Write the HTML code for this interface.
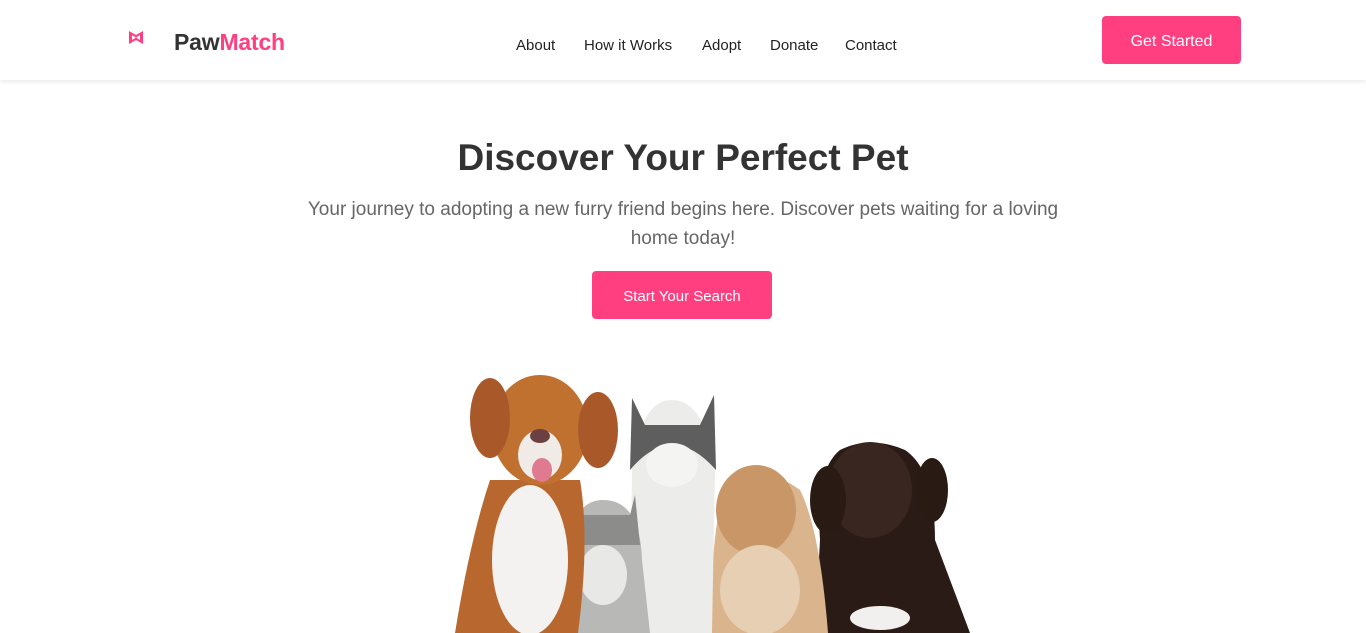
<!DOCTYPE html>
<html><head><meta charset="utf-8"><style>
*{margin:0;padding:0;box-sizing:border-box}
body{width:1366px;height:633px;overflow:hidden;background:#fff;font-family:"Liberation Sans",sans-serif;color:#333;position:relative}
header{position:absolute;left:0;top:0;width:1366px;height:80px;background:#fff;box-shadow:0 2px 4px rgba(0,0,0,.08)}
.logo{position:absolute;left:174px;top:29px;font-size:23px;font-weight:700;color:#333;letter-spacing:-0.2px}
.logo span{color:#ff3f7f}
nav a{position:absolute;top:37px;font-size:15px;color:#222;text-decoration:none;white-space:nowrap}
.btn{position:absolute;background:#ff3f7f;color:#fff;border-radius:4px;text-align:center}
h1{position:absolute;top:137px;width:100%;text-align:center;font-size:37px;font-weight:600;color:#333}
p.sub{position:absolute;top:195px;left:233px;width:900px;text-align:center;font-size:19px;line-height:29px;color:#666}
</style></head><body>
<header>
<svg style="position:absolute;left:128px;top:30px" width="16" height="15" viewBox="0 0 16 15"><path d="M1 1 L8 5 L15 1 L15 14 L8 10 L1 14 Z M4 5 L4 10 L8 7.5 Z M12 5 L12 10 L8 7.5Z" fill="#ff3f7f" fill-rule="evenodd"/></svg>
<div class="logo">Paw<span>Match</span></div>
<nav><a style="left:516px">About</a><a style="left:584px">How it Works</a><a style="left:702px">Adopt</a><a style="left:770px">Donate</a><a style="left:845px">Contact</a></nav>
<div class="btn" style="left:1102px;top:16px;width:139px;height:48px;line-height:51px;font-size:16px">Get Started</div>
</header>
<h1>Discover Your Perfect Pet</h1>
<p class="sub">Your journey to adopting a new furry friend begins here. Discover pets waiting for a loving<br>home today!</p>
<div class="btn" style="left:592px;top:271px;width:180px;height:48px;line-height:51px;font-size:15px">Start Your Search</div>
<svg style="position:absolute;left:0;top:0" width="1366" height="633">
<path d="M815 633 L820 540 Q815 470 840 450 Q870 435 905 450 Q935 470 935 540 L970 633Z" fill="#2b1b16"/>
<ellipse cx="870" cy="490" rx="42" ry="48" fill="#3a2620"/>
<ellipse cx="828" cy="500" rx="18" ry="34" fill="#2a1a14"/>
<ellipse cx="932" cy="490" rx="16" ry="32" fill="#2a1a14"/>
<ellipse cx="880" cy="618" rx="30" ry="12" fill="#f2f0ee"/>
<path d="M710 633 Q712 520 725 490 Q760 460 800 490 Q820 530 828 633Z" fill="#d9b48c"/>
<ellipse cx="756" cy="510" rx="40" ry="45" fill="#c99668"/>
<ellipse cx="760" cy="590" rx="40" ry="45" fill="#e6cfb2"/>
<path d="M630 633 L632 470 Q640 400 672 400 Q705 400 715 470 L712 633Z" fill="#ececea"/>
<path d="M632 398 L645 425 L700 425 L714 395 L716 470 Q672 420 630 470Z" fill="#5e5e5e"/>
<ellipse cx="672" cy="465" rx="26" ry="22" fill="#f4f4f2"/>
<path d="M565 633 L568 560 Q570 500 603 500 Q640 500 642 560 L650 633Z" fill="#b8b8b6"/>
<path d="M567 500 L580 515 L630 515 L635 495 L640 545 L568 545Z" fill="#8c8c8a"/>
<ellipse cx="603" cy="575" rx="24" ry="30" fill="#e8e8e6"/>
<path d="M455 633 Q470 540 490 480 L580 480 Q590 540 578 633Z" fill="#b8672e"/>
<ellipse cx="530" cy="560" rx="38" ry="75" fill="#f4f2f0"/>
<ellipse cx="540" cy="430" rx="48" ry="55" fill="#c0702f"/>
<ellipse cx="490" cy="418" rx="20" ry="40" fill="#a9582a"/>
<ellipse cx="598" cy="430" rx="20" ry="38" fill="#a9582a"/>
<ellipse cx="540" cy="455" rx="22" ry="25" fill="#f0ebe6"/>
<ellipse cx="542" cy="470" rx="10" ry="12" fill="#e07a90"/>
<ellipse cx="540" cy="436" rx="10" ry="7" fill="#6b4040"/>
</svg>
</body></html>
